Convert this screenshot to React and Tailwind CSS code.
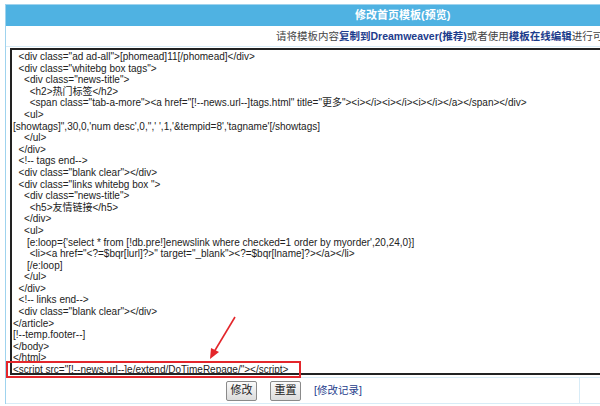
import React from "react";

// 修改首页模板 — template editor screenshot, with the red annotation on the script line.

const CODE = [
  '  <div class="ad ad-all">[phomead]11[/phomead]</div>',
  '  <div class="whitebg box tags">',
  '    <div class="news-title">',
  '      <h2>热门标签</h2>',
  '      <span class="tab-a-more"><a href="[!--news.url--]tags.html" title="更多"><i></i><i></i><i></i></a></span></div>',
  '    <ul>',
  "[showtags]\",30,0,'num desc',0,'',' ',1,'&tempid=8','tagname'[/showtags]",
  '    </ul>',
  '  </div>',
  '  <!-- tags end-->',
  '  <div class="blank clear"></div>',
  '  <div class="links whitebg box ">',
  '    <div class="news-title">',
  '      <h5>友情链接</h5>',
  '    </div>',
  '    <ul>',
  "     [e:loop={'select * from [!db.pre!]enewslink where checked=1 order by myorder',20,24,0}]",
  '      <li><a href="<?=$bqr[lurl]?>" target="_blank"><?=$bqr[lname]?></a></li>',
  '     [/e:loop]',
  '    </ul>',
  '  </div>',
  '  <!-- links end-->',
  '  <div class="blank clear"></div>',
  '</article>',
  '[!--temp.footer--]',
  '</body>',
  '</html>',
];

const SCRIPT_LINE = '<script src="[!--news.url--]e/extend/DoTimeRepage/"></script>';

function Btn({ children }) {
  return (
    <button className="h-[20px] w-[31px] rounded-[2px] border border-[#8a8a8a] bg-gradient-to-b from-[#fafafa] to-[#dcdcdc] text-[11px] leading-none text-[#222]">
      {children}
    </button>
  );
}

export default function App() {
  return (
    <div
      className="relative h-[406px] w-[600px] overflow-hidden bg-white pl-[5px] pt-[4px]"
      style={{ fontFamily: '"Liberation Sans", "Noto Sans CJK SC", sans-serif' }}
    >
      <div className="w-[900px] border-l border-t border-[#9fd3ee]">
        {/* header */}
        <div className="flex h-[21px] items-center bg-[#4fb2e2] pl-[349px] text-[11px] font-bold text-white">
          修改首页模板(预览)
        </div>

        {/* hint row */}
        <div className="flex h-[21px] items-center border-b border-[#d8ecf7] pl-[270px] pt-[2px] text-[10.5px] whitespace-nowrap text-[#444]">
          请将模板内容
          <span className="font-bold text-[#1d3c8c]">复制到Dreamweaver(推荐)</span>
          或者使用
          <span className="font-bold text-[#1d3c8c]">模板在线编辑</span>
          进行可视化编辑
        </div>

        {/* textarea */}
        <div className="pl-[4px] pt-[1px]">
          <div className="h-[327px] border-l-2 border-t-2 border-b-2 border-[#222] pl-[1px] pt-[1px] text-[10px] leading-[11.6px] whitespace-pre text-[#222]">
            {CODE.map((l, i) => (
              <div key={i}>{l}</div>
            ))}
            <div>{SCRIPT_LINE}</div>
          </div>
        </div>

        {/* buttons row */}
        <div className="mt-[2px] flex h-[27px] border-t border-b border-[#d8ecf7]">
          <div className="flex w-[574px] items-center gap-[13px] border-r border-[#d8ecf7] pl-[220px]">
            <Btn>修改</Btn>
            <Btn>重置</Btn>
            <span className="text-[10.5px] text-[#1d3c8c]">[修改记录]</span>
          </div>
        </div>
      </div>

      {/* red annotation box */}
      <div className="absolute left-[6px] top-[361px] h-[17px] w-[295px] border-2 border-[#e3262b]" />

      {/* red arrow */}
      <svg className="absolute left-[200px] top-[312px]" width="44" height="50" viewBox="0 0 44 50">
        <line x1="35" y1="5" x2="14" y2="40" stroke="#e3262b" strokeWidth="1.6" />
        <polygon points="10,47 11,36 19,40" fill="#e3262b" />
      </svg>
    </div>
  );
}
